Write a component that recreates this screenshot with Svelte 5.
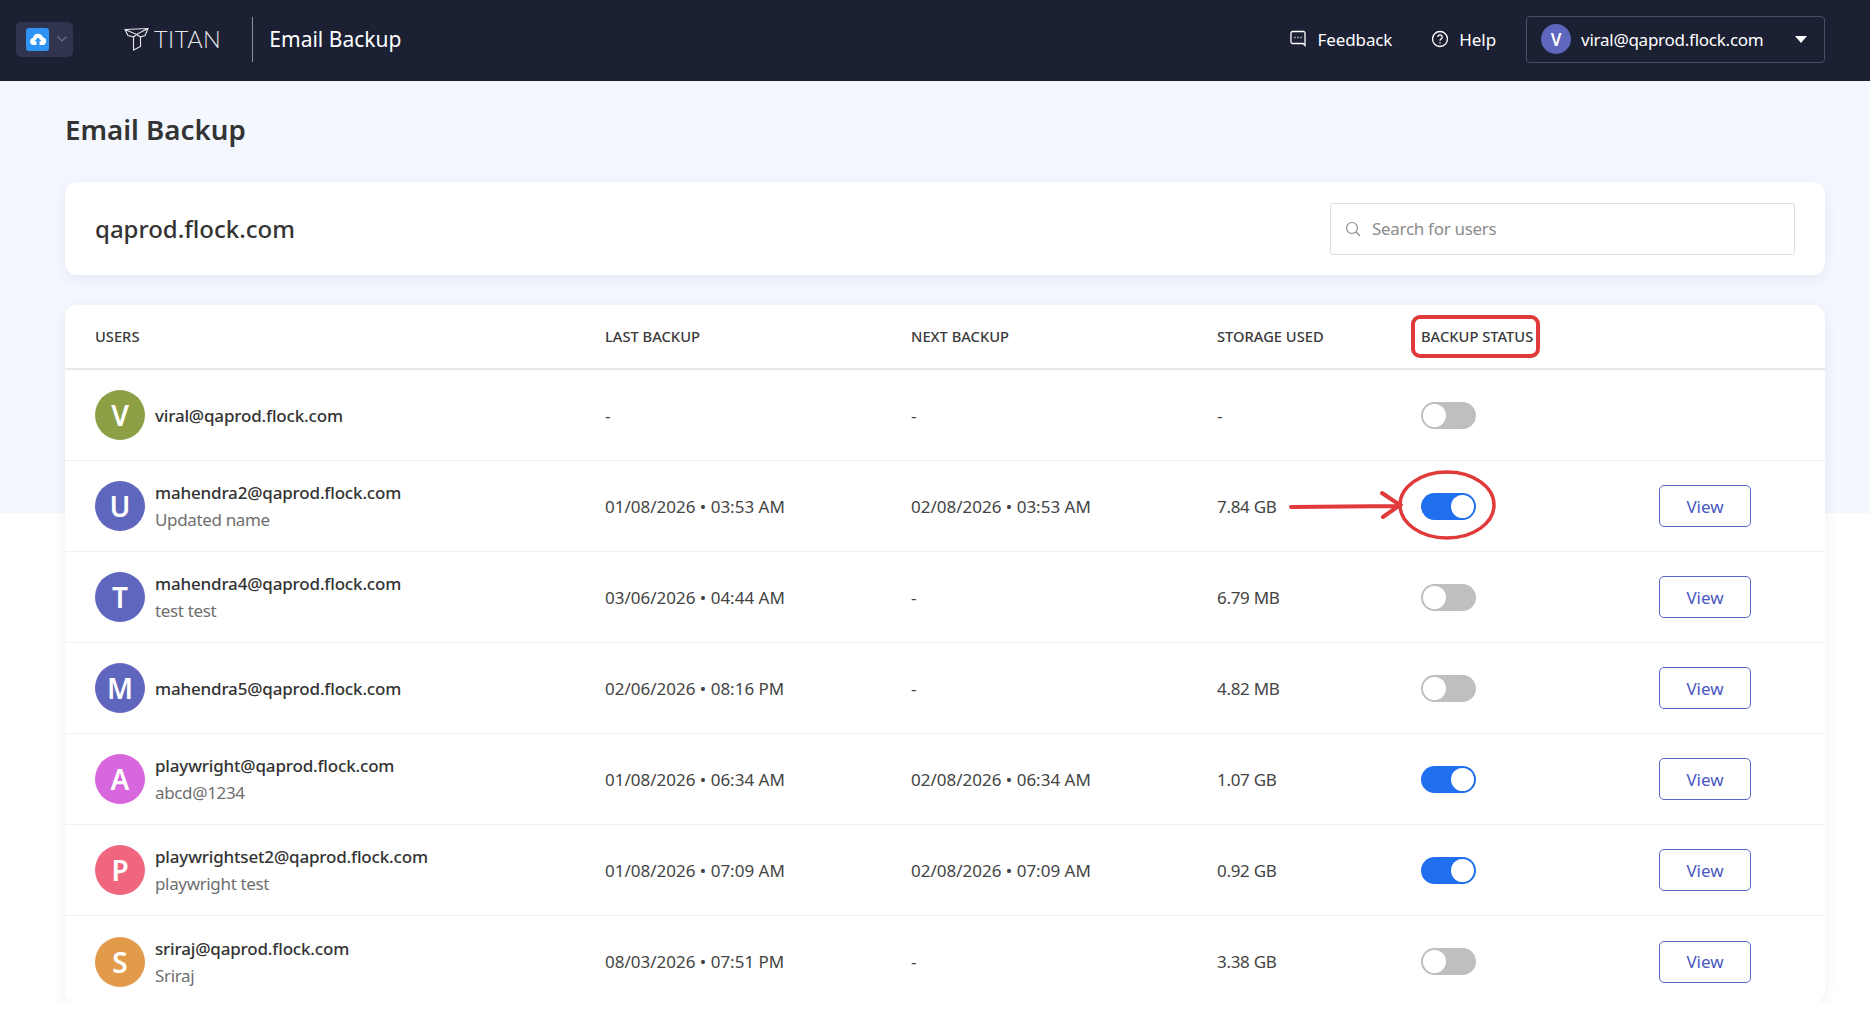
<script>
 const users = [
     { letter: "V", color: "#8c9f45", email: "viral@qaprod.flock.com", name: "", last: "-", next: "-", storage: "-", on: false, view: false },
     { letter: "U", color: "#5f66bd", email: "mahendra2@qaprod.flock.com", name: "Updated name", last: "01/08/2026 • 03:53 AM", next: "02/08/2026 • 03:53 AM", storage: "7.84 GB", on: true, view: true },
     { letter: "T", color: "#5f66bd", email: "mahendra4@qaprod.flock.com", name: "test test", last: "03/06/2026 • 04:44 AM", next: "-", storage: "6.79 MB", on: false, view: true },
     { letter: "M", color: "#5f66bd", email: "mahendra5@qaprod.flock.com", name: "", last: "02/06/2026 • 08:16 PM", next: "-", storage: "4.82 MB", on: false, view: true },
     { letter: "A", color: "#d866dc", email: "playwright@qaprod.flock.com", name: "abcd@1234", last: "01/08/2026 • 06:34 AM", next: "02/08/2026 • 06:34 AM", storage: "1.07 GB", on: true, view: true },
     { letter: "P", color: "#f0667f", email: "playwrightset2@qaprod.flock.com", name: "playwright test", last: "01/08/2026 • 07:09 AM", next: "02/08/2026 • 07:09 AM", storage: "0.92 GB", on: true, view: true },
     { letter: "S", color: "#e29a4b", email: "sriraj@qaprod.flock.com", name: "Sriraj", last: "08/03/2026 • 07:51 PM", next: "-", storage: "3.38 GB", on: false, view: true }
 ];
</script>

<header class="topbar">
    <div class="appSwitch">
        <span class="appIcon">
            <svg width="18" height="14" viewBox="0 0 18 14"><path d="M4.5 13a3.6 3.6 0 0 1-.6-7.1 5.2 5.2 0 0 1 10-.6A3.9 3.9 0 0 1 13.800 13H10.500V9.200h2L9 5.500 5.500 9.200h2V13z" fill="#fff"/></svg>
        </span>
        <svg width="12" height="8" viewBox="0 0 12 8"><path d="M1.500 1.500 6 6l4.500-4.500" fill="none" stroke="#6b7089" stroke-width="1.200"/></svg>
    </div>
    <div class="brand">
        <svg width="25" height="24" viewBox="0 0 25 24" fill="none" stroke="#e8e8ea" stroke-width="1.100"><path d="M1 2.500 24 1.500 21 8.500 16.500 10 16.500 19.500 9.500 23 9.500 10 4 8.500zM1 2.500 12.500 7.500 24 1.500M12.500 7.500 9.500 10M12.500 7.500 16.500 10"/></svg>
        <span class="brandName">TITAN</span>
    </div>
    <div class="divider"></div>
    <div class="product">Email Backup</div>
    <div class="topRight">
        <div class="topLink">
            <svg width="18" height="18" viewBox="0 0 17 18" fill="none" stroke="#fff" stroke-width="1.300"><path d="M15.500 15.500V3a1.500 1.500 0 0 0-1.500-1.500H3A1.500 1.500 0 0 0 1.500 3v9A1.500 1.500 0 0 0 3 13.500h10.500z"/><path d="M5 7.500h1M8 7.500h1M11 7.500h1" stroke-width="1.400"/></svg>
            Feedback
        </div>
        <div class="topLink help">
            <svg width="18" height="18" viewBox="0 0 18 18" fill="none" stroke="#fff" stroke-width="1.300"><circle cx="9" cy="9" r="7.500"/><path d="M6.800 7a2.200 2.200 0 1 1 3.400 1.900c-.8.500-1.200.9-1.200 1.800"/><path d="M9 12.300v1.200"/></svg>
            Help
        </div>
        <div class="account">
            <span class="accountAvatar">V</span>
            <span class="accountMail">viral@qaprod.flock.com</span>
            <span class="caret"></span>
        </div>
    </div>
</header>

<main class="page">
    <h1>Email Backup</h1>

    <section class="card domainCard">
        <div class="domain">qaprod.flock.com</div>
        <div class="search">
            <svg width="16" height="16" viewBox="0 0 16 16" fill="none" stroke="#8c8c8c" stroke-width="1.200"><circle cx="7" cy="7" r="5.500"/><path d="M11 11l4 4"/></svg>
            <span>Search for users</span>
        </div>
    </section>

    <section class="card tableCard">
        <div class="row headRow">
            <div class="cell">USERS</div>
            <div class="cell">LAST BACKUP</div>
            <div class="cell">NEXT BACKUP</div>
            <div class="cell">STORAGE USED</div>
            <div class="cell">BACKUP STATUS</div>
            <div class="cell"></div>
        </div>
        {#each users as user}
            <div class="row userRow">
                <div class="cell userCell">
                    <span class="avatar" style="background:{user.color}">{user.letter}</span>
                    <div class="userText">
                        <div class="email">{user.email}</div>
                        {#if user.name}
                            <div class="fullName">{user.name}</div>
                        {/if}
                    </div>
                </div>
                <div class="cell">{user.last}</div>
                <div class="cell">{user.next}</div>
                <div class="cell storage">{user.storage}</div>
                <div class="cell">
                    <span class="toggle" class:on={user.on}><span class="knob"></span></span>
                </div>
                <div class="cell">
                    {#if user.view}
                        <button class="viewBtn">View</button>
                    {/if}
                </div>
            </div>
        {/each}
    </section>
</main>

<!-- red markup drawn over the screenshot -->
<svg class="markup" width="1870" height="1026" viewBox="0 0 1870 1026" fill="none" stroke="#e03a3a" stroke-width="4" stroke-linecap="round">
    <rect x="1413" y="317" width="125" height="39" rx="7"/>
    <ellipse cx="1447" cy="505" rx="47" ry="33" stroke-width="3.500"/>
    <path d="M1291 507 1398 506M1382 493 1400 505 1383 517"/>
</svg>

<style>
 :global(body) {
     background: #fff linear-gradient(#f4f7fe 513px, #fff 513px) no-repeat;
     color: #333;
     font-family: "Noto Sans", "Open Sans", sans-serif;
 }

 .topbar {
     height: 81px;
     box-sizing: border-box;
     background: #1c2033;
     display: flex;
     align-items: center;
     padding: 0 45px 3px 16px;
     color: #fff;
 }

 .appSwitch {
     width: 57px;
     height: 35px;
     box-sizing: border-box;
     background: #31344f;
     border-radius: 5px;
     display: flex;
     align-items: center;
     gap: 7px;
     padding-left: 10px;
 }

 .appIcon {
     width: 23px;
     height: 23px;
     background: #2f93f5;
     border-radius: 3px;
     display: flex;
     align-items: center;
     justify-content: center;
 }

 .brand {
     display: flex;
     align-items: center;
     gap: 5px;
     margin-left: 51px;
 }

 .brandName {
     font-family: "Lato", sans-serif;
     font-weight: 300;
     font-size: 23.500px;
     letter-spacing: 0.5px;
     color: #e8e8ea;
 }

 .divider {
     width: 1px;
     height: 45px;
     background: #8d8f9b;
     margin: 0 16px 0 31px;
 }

 .product {
     font-size: 21px;
 }

 .topRight {
     margin-left: auto;
     display: flex;
     align-items: center;
 }

 .topLink {
     display: flex;
     align-items: center;
     gap: 10px;
     font-size: 17px;
     letter-spacing: -0.1px;
     margin-right: 39px;
 }

 .help {
     margin-right: 30px;
 }

 .account {
     width: 299px;
     height: 47px;
     box-sizing: border-box;
     border: 1px solid #4a4e69;
     border-radius: 4px;
     display: flex;
     align-items: center;
     padding: 0 17px 0 14px;
 }

 .accountAvatar {
     width: 30px;
     height: 30px;
     border-radius: 50%;
     background: #5f66bd;
     font-weight: 600;
     font-size: 17px;
     display: flex;
     align-items: center;
     justify-content: center;
     margin-right: 10px;
 }

 .accountMail {
     font-size: 17px;
     letter-spacing: -0.25px;
     flex: 1;
 }

 .caret {
     width: 0;
     height: 0;
     border-left: 6px solid transparent;
     border-right: 6px solid transparent;
     border-top: 7px solid #fff;
 }

 .page {
     padding: 0 45px 0 65px;
 }

 h1 {
     margin: 0;
     padding-top: 25px;
     height: 76px;
     font-size: 27.700px;
     line-height: 46px;
     font-weight: 600;
     color: #333;
 }

 .card {
     background: #fff;
     border-radius: 12px;
     box-shadow: 0 4px 14px rgba(60, 70, 110, 0.08);
 }

 .domainCard {
     height: 93px;
     box-sizing: border-box;
     display: flex;
     align-items: center;
     justify-content: space-between;
     padding: 0 30px;
     margin-bottom: 30px;
 }

 .domain {
     font-size: 24px;
     font-weight: 500;
 }

 .search {
     width: 465px;
     height: 52px;
     box-sizing: border-box;
     border: 1px solid #dedede;
     border-radius: 3px;
     display: flex;
     align-items: center;
     gap: 11px;
     padding-left: 14px;
     font-size: 17px;
     letter-spacing: -0.3px;
     color: #8c8c8c;
 }

 .tableCard {
     overflow: hidden;
 }

 .row {
     display: grid;
     grid-template-columns: 510px 306px 306px 204px 238px 1fr;
     align-items: center;
     padding-left: 30px;
     font-size: 17px;
     color: #444;
 }

 .headRow {
     height: 65px;
     box-sizing: border-box;
     padding-bottom: 1px;
     border-bottom: 2px solid #e8e8e8;
     font-size: 14.700px;
     font-weight: 500;
     color: #3a3a3a;
 }

 .userRow {
     height: 91px;
     box-sizing: border-box;
     border-bottom: 1px solid #f0f0f0;
 }

 .userRow:last-child {
     height: 87px;
     padding-top: 4px;
     border-bottom: none;
 }

 .userCell {
     display: flex;
     align-items: center;
     gap: 10px;
 }

 .avatar {
     width: 50px;
     height: 50px;
     border-radius: 50%;
     color: #fff;
     font-size: 28px;
     font-weight: 600;
     display: flex;
     align-items: center;
     justify-content: center;
 }

 .email {
     font-weight: 500;
     color: #333;
     line-height: 27px;
     letter-spacing: -0.17px;
 }

 .fullName {
     color: #6f6f6f;
     line-height: 27px;
     letter-spacing: -0.35px;
 }

 .storage {
     letter-spacing: -0.3px;
 }

 .toggle {
     display: block;
     width: 55px;
     height: 27px;
     border-radius: 14px;
     background: #bfbfbf;
     position: relative;
 }

 .toggle.on {
     background: #1f6fee;
 }

 .knob {
     position: absolute;
     top: 2px;
     left: 2px;
     width: 23px;
     height: 23px;
     border-radius: 50%;
     background: #fff;
 }

 .on .knob {
     left: 30px;
 }

 .viewBtn {
     display: block;
     width: 92px;
     height: 42px;
     background: #fff;
     border: 1px solid #5a67c8;
     border-radius: 5px;
     color: #4a58c0;
     font-family: inherit;
     font-size: 17px;
     padding: 0;
 }

 .markup {
     position: absolute;
     top: 0;
     left: 0;
     pointer-events: none;
 }
</style>
